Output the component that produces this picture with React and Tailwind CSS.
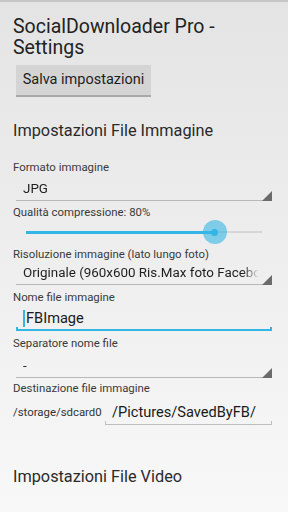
function Label({ children, className = '' }) {
    return <div className={`h-[16px] text-[11.4px] leading-[16px] text-[#3a3a3a] ${className}`}>{children}</div>;
}

function Spinner({ value, className = '' }) {
    return (
        <div className={`relative ml-[3px] h-[24px] w-[259px] ${className}`}>
            <div className="pl-[7px]">
                <div className="h-[23px] w-[236px] overflow-hidden whitespace-nowrap text-[13.4px] leading-[23px] text-[#1e1e1e] [mask-image:linear-gradient(to_right,black_93%,transparent)]">
                    {value}
                </div>
            </div>
            <div className="h-px w-[247px] bg-[#b8b8b8]" />
            <div className="absolute bottom-0 right-[3px] h-[10px] w-[10px] bg-[#6b6b6b] [clip-path:polygon(100%_0,100%_100%,0_100%)]" />
        </div>
    );
}

function EditText({ value, focused, className = '' }) {
    const line = focused ? 'bg-[#33b5e5]' : 'bg-[#bdbdbd]';
    return (
        <div className={`relative h-[24px] ${className}`}>
            <div className="flex h-[22px] items-center whitespace-nowrap pl-[7px] text-[14.6px] leading-[22px] text-[#1a1a1a]">
                {focused && <span className="mr-px h-[17px] w-[2px] bg-[#33b5e5]" />}
                {value}
            </div>
            <div className={`absolute bottom-0 left-0 right-0 ${focused ? 'h-[2px]' : 'h-px'} ${line}`} />
            <div className={`absolute bottom-0 left-0 h-[4px] ${focused ? 'w-[2px]' : 'w-px'} ${line}`} />
            <div className={`absolute bottom-0 right-0 h-[4px] ${focused ? 'w-[2px]' : 'w-px'} ${line}`} />
        </div>
    );
}

function Slider({ percent }) {
    return (
        <div className="relative ml-[13px] h-[24px] w-[236px]">
            <div className="absolute left-0 right-0 top-[11px] h-[2px] bg-[#d6d6d6]" />
            <div className="absolute left-0 top-[11px] h-[3px] bg-[#33b5e5]" style={{ width: `${percent}%` }} />
            <div
                className="absolute top-0 flex h-[24px] w-[24px] -translate-x-1/2 items-center justify-center rounded-full bg-[#33b5e5]/60"
                style={{ left: `${percent}%` }}
            >
                <div className="h-[7px] w-[7px] rounded-full bg-[#33b5e5]" />
            </div>
        </div>
    );
}

export default function App() {
    return (
        <div className="h-[512px] w-[288px] overflow-hidden border-t-2 border-[#c6c6c6] bg-gradient-to-b from-[#e4e4e4] via-[#eeeeee] to-[#f8f8f8] pl-[13px] font-['Roboto',sans-serif]">
            <div className="pt-[14px] text-[19.5px] leading-[21px] text-[#222]">
                SocialDownloader Pro -
                <br />
                Settings
            </div>

            <button className="ml-[3px] mt-[7px] h-[32px] w-[135px] border-b-2 border-[#a8a8a8] bg-[#d4d4d4] text-[14.5px] text-[#1e1e1e]">
                Salva impostazioni
            </button>

            <div className="mt-[24px] h-[20px] text-[16.3px] leading-[20px] text-[#2a2a2a]">Impostazioni File Immagine</div>

            <Label className="mt-[18px]">Formato immagine</Label>
            <Spinner value="JPG" className="mt-[2px]" />

            <Label className="mt-[3px]">Qualità compressione: 80%</Label>
            <Slider percent={80} />

            <Label className="mt-[2px]">Risoluzione immagine (lato lungo foto)</Label>
            <Spinner value="Originale (960x600 Ris.Max foto Facebook)" className="-mt-px" />

            <Label className="mt-[4px]">Nome file immagine</Label>
            <EditText value="FBImage" focused className="ml-[3px] mt-[2px] w-[256px]" />

            <Label className="mt-[4px]">Separatore nome file</Label>
            <Spinner value="-" className="mt-[3px]" />

            <Label className="mt-[2px]">Destinazione file immagine</Label>
            <div className="mt-[5px] flex items-end">
                <div className="h-[24px] w-[92px] text-[11.4px] leading-[22px] text-[#333]">/storage/sdcard0</div>
                <EditText value="/Pictures/SavedByFB/" className="w-[167px]" />
            </div>

            <div className="mt-[42px] h-[20px] text-[16.3px] leading-[20px] text-[#2a2a2a]">Impostazioni File Video</div>
        </div>
    );
}
